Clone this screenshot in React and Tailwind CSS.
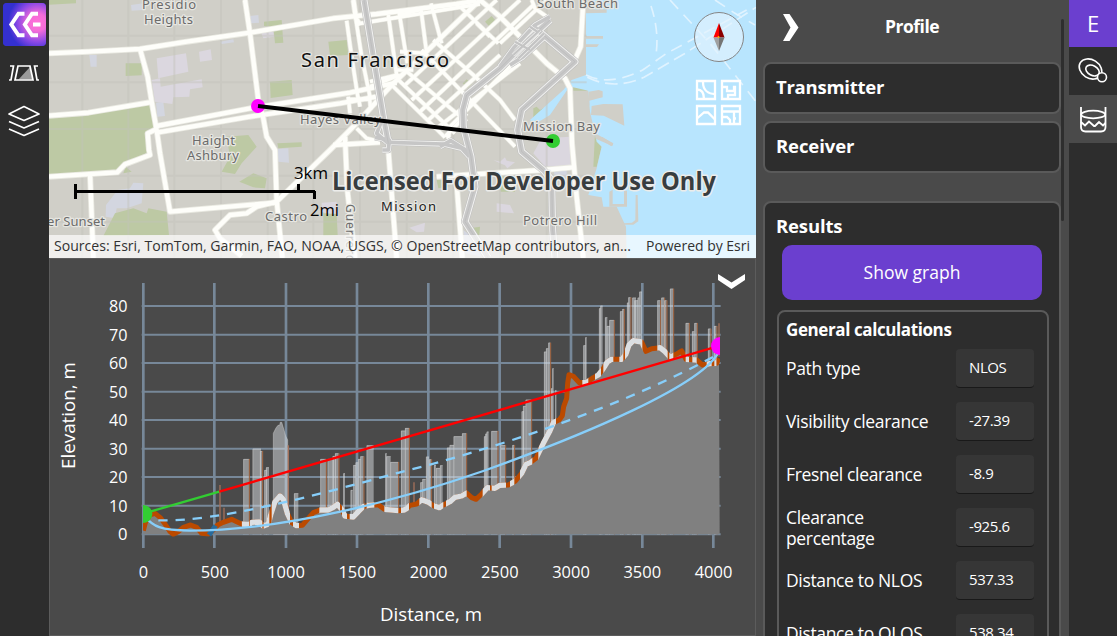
import React from 'react';

const shift = (pts, dx, dy = 0) => pts.map(([x, y]) => [x + dx, y + dy]);
const str = (pts) => pts.map((p) => p.join(',')).join(' ');

/* ---------- map data, in thirds of a pixel ---------- */
const roads = [
  '147,160 265,155 420,147 560,125 750,98 1000,55 1130,42 1370,12 1430,2',
  '420,147 443,230 455,305 470,390 480,460 510,635 828,608',
  '147,347 265,338 450,307',
  '470,378 750,325 1050,278 1190,248',
  '470,398 750,350 1020,310 1130,290',
  '735,0 750,100 775,300 790,355 800,410 825,450 830,600 847,774',
  '470,387 443,400 447,450 450,465 375,493 352,517 147,530',
  '270,520 280,774',
  '830,605 770,620 740,640 690,645 645,690 660,715 725,768',
  '830,605 990,450 1070,370 1180,250 1440,0',
  '1000,435 1140,427',
  '1035,410 1042,570 1065,774',
  '1165,450 1190,774',
  '1370,550 1387,774',
  '1310,530 1630,510 1720,502',
  '1440,0 1500,50 1640,190 1695,235 1710,265 1716,430 1730,590 1750,774',
  '1750,0 1742,140 1720,190',
  '1060,0 1068,55 1080,75',
];
const streets = [
  '1068,60 1085,170 1110,290', '1040,62 1055,170 1075,300', '1165,45 1190,225', '1197,35 1222,190', '1262,20 1280,160',
  '1293,10 1325,130', '1070,72 1440,12', '1110,260 1200,225', '1040,298 1110,298', '1045,290 1050,340', '1075,290 1080,320', '1108,285 1112,330',
  '1210,260 1490,0', '1235,300 1560,0', '1260,335 1600,15', '1285,360 1500,165', '1310,385 1560,190', '1335,410 1370,375 1400,340', '1500,130 1640,0',
  '1170,250 1335,412', '1190,235 1365,400', '1215,210 1400,365', '1265,150 1420,310 1545,440', '1300,120 1420,225 1500,300 1545,360',
  '1380,20 1495,130', '1430,70 1470,110', '1200,155 1280,160', '1200,45 1260,30', '1110,245 1190,225', '1190,210 1240,210',
  '1345,418 1350,380 1420,310 1560,170', '1595,0 1605,25 1640,50', '1070,385 1100,415 1140,425',
];
const freeways = [
  '1650,60 1590,115 1500,205 1400,285 1388,330 1390,380 1413,470 1425,560 1395,665 1430,720 1465,774',
  '1600,80 1725,185 1565,330 1553,390 1565,455 1630,510 1655,540 1658,690 1665,774',
  '1092,0 1125,200 1150,350 1165,430',
];
const ramps = [
  '1165,427 1330,432 1385,445 1408,470', '1150,350 1130,400 1165,430', '1125,412 1168,420 1165,450 1147,450',
  '1320,440 1352,422 1405,455', '1500,200 1540,145 1605,75 1650,50', '1530,195 1570,170 1640,105',
];
const lanes = [
  '1540,165 1620,90', '1555,175 1632,100', '1590,80 1612,95', '1545,125 1590,150',
];
const parks = [
  '147,350 265,342 450,312 465,385 443,400 447,455 375,490 352,512 147,525',
  '147,0 228,0 228,10 147,14', '377,190 425,190 425,226 377,228', '810,245 875,240 878,285 812,294', '792,65 845,60 850,128 825,130 820,80 792,78',
  '985,125 1040,120 1045,165 990,168', '1455,65 1475,48 1490,65 1470,82', '1388,250 1400,238 1415,252 1402,265',
  '680,410 745,405 770,440 725,490 705,522 665,515 690,470', '718,545 760,520 800,535 795,565 760,562', '832,430 905,427 905,440 835,445',
  '345,640 400,625 440,640 445,625 500,635 507,705 310,708', '970,640 1010,642 1013,705 970,708', '1785,400 1805,440 1790,500 1780,500',
  '1600,325 1610,320 1620,330 1675,300 1640,335 1600,360', '1720,262 1760,262 1762,272 1720,272', '1410,685 1440,680 1438,705 1415,705',
  '377,500 395,515 370,520', '1310,540 1345,537 1345,560 1315,565', '1500,530 1540,525 1545,575 1502,575', '1165,182 1185,180 1187,205 1168,205',
  '500,390 720,352 720,358 500,396',
];
const lavender = [
  '470,175 558,160 565,215 475,235', '597,155 632,148 636,180 600,185', '455,240 480,235 482,260 605,238 608,262 570,268 568,290 520,292 517,312 465,305',
  '1625,415 1710,410 1712,495 1635,500 1600,460', '1480,480 1500,485 1515,472 1520,482 1545,487 1522,505 1515,496 1500,490', '1490,610 1530,615 1542,640 1490,635', '1228,683 1275,668 1272,695 1250,697',
  '782,95 820,95 822,110 790,115', '965,608 1010,605 1015,650 965,635',
];
const bluish = [
  '393,15 430,10 430,30 395,32', '268,165 290,165 290,200 272,200', '750,48 775,45 777,68 753,70', '660,125 700,118 702,127 665,132',
  '468,308 490,305 495,348 472,350', '353,570 390,565 400,548 430,550 425,610 380,625 350,625 345,655 317,650 318,615', '832,447 865,445 867,488 835,485',
  '1660,510 1700,510 1700,530 1665,530', '1390,690 1440,730 1445,770 1395,760',
];

function MapLabel({ x, y, w, size = 13, fill = '#6b6b6b', halo = '#e6e6e1', children }) {
  return (
    <text x={x} y={y} textLength={w} fontSize={size} fill={fill} stroke={halo} strokeWidth="2.5" strokeLinejoin="round" paintOrder="stroke">
      {children}
    </text>
  );
}

function MapView() {
  return (
    <svg className="block h-[258px] w-[707px]" viewBox="49 0 707 258" fontFamily="'Noto Sans', sans-serif">
      <rect x="49" width="707" height="258" fill="#d0cfc8" />
      <g transform="scale(.33333)">
        {bluish.map((p) => <polygon key={p} points={p} fill="#d3d6e0" />)}
        {lavender.map((p) => <polygon key={p} points={p} fill="#dbd7df" />)}
        {parks.map((p) => <polygon key={p} points={p} fill="#bdc9a4" />)}
        <polygon fill="#b8e5fe" points="1780,0 2268,0 2268,774 1880,774 1878,680 1850,620 1810,620 1805,592 1765,585 1790,505 1805,440 1790,425 1785,400 1770,335 1765,272 1720,262 1705,265 1650,345 1605,372 1590,360 1690,270 1715,240 1758,225 1758,40 1820,38 1820,28 1780,28" />
        <g fill="#d0cfc8">
          <path d="M1755 108h54v8h-54zM1755 133h42l-6 8h-36zM1766 275l30-5 12 4v18l-40 10v14h-5zM1775 318l35-6 58 1 5 64-62-30-38-2zM1785 400l55 30-3 8-50-22z" />
          <path d="M1795 413l12-2 32 20-5 8zM1828 575l10-6v43h34v-40h9v48h-53zM1907 585h6l2 79-15 10h-28v-4l24-2 10-8z" />
        </g>
        <g stroke="#c3c3bb" strokeWidth="6" opacity=".45">
          {[247, 385, 523, 663, 803, 940, 1080, 1220, 1360, 1500, 1640].map((x) => <path key={x} d={`M${x} 0V774`} />)}
          {[107, 247, 387, 527, 665].map((y) => <path key={y} d={`M147 ${y}H1760`} />)}
        </g>
        <g fill="none" strokeLinejoin="round">
          {roads.map((p) => <polyline key={p} points={p} stroke="#e9e9e1" strokeWidth="18" />)}
          {streets.map((p) => <polyline key={p} points={p} stroke="#e9e9e1" strokeWidth="14" />)}
          {streets.map((p) => <polyline key={p} points={p} stroke="#fefefa" strokeWidth="10" />)}
          {roads.map((p) => <polyline key={p} points={p} stroke="#fefefa" strokeWidth="13" />)}
          {ramps.map((p) => <polyline key={p} points={p} stroke="#bdbdbd" strokeWidth="19" />)}
          {freeways.map((p) => <polyline key={p} points={p} stroke="#bdbdbd" strokeWidth="24" />)}
          {ramps.map((p) => <polyline key={p} points={p} stroke="#f2f2f0" strokeWidth="16" />)}
          {freeways.map((p) => <polyline key={p} points={p} stroke="#f2f2f0" strokeWidth="21" />)}
          {ramps.map((p) => <polyline key={p} points={p} stroke="#c6c6c6" strokeWidth="11" />)}
          {freeways.map((p) => <polyline key={p} points={p} stroke="#c8c8c8" strokeWidth="15" />)}
          {freeways.map((p) => <polyline key={p} points={p} stroke="#b9b9b9" strokeWidth="2" />)}
          {lanes.map((p) => <polyline key={p} points={p} stroke="#f2f2f0" strokeWidth="11" />)}
          {lanes.map((p) => <polyline key={p} points={p} stroke="#c4c4c4" strokeWidth="7" />)}
        </g>
        <g fill="none" stroke="#e0f3ff" strokeWidth="5">
          <path d="M1953 18q25 75 15 145" strokeDasharray="34 18" />
          <path d="M1758 225q70 35 170-15l72-50 240-130" strokeDasharray="36 20" />
          <path d="M1762 232q80 40 170 0l120-70 216-140" strokeDasharray="38 18" />
          <path d="M2010 0l120 130 138 175M2145 0l60 40 60 35" strokeDasharray="36 24" />
        </g>
      </g>
      <MapLabel x="142" y="9" w="54">Presidio</MapLabel>
      <MapLabel x="144" y="24" w="49">Heights</MapLabel>
      <MapLabel x="537" y="8" w="81">South Beach</MapLabel>
      <MapLabel x="301" y="67" w="148" size="20" fill="#111">San Francisco</MapLabel>
      <MapLabel x="300" y="124" w="81">Hayes Valley</MapLabel>
      <MapLabel x="523" y="131" w="77">Mission Bay</MapLabel>
      <MapLabel x="192" y="145" w="43">Haight</MapLabel>
      <MapLabel x="187" y="160" w="52">Ashbury</MapLabel>
      <MapLabel x="265" y="221" w="42">Castro</MapLabel>
      <MapLabel x="47" y="226" w="58">er Sunset</MapLabel>
      <MapLabel x="381" y="211" w="55" fill="#222">Mission</MapLabel>
      <MapLabel x="523" y="225" w="74">Potrero Hill</MapLabel>
      <g transform="rotate(90 346 204)">
        <MapLabel x="346" y="204" w="58" size="12">Guerrero</MapLabel>
      </g>

      <circle cx="258" cy="106" r="7" fill="#f0f" />
      <circle cx="553" cy="141" r="7" fill="#32cd32" />
      <path d="M258 106L553 141" stroke="#000" strokeWidth="4" />

      <path d="M75.500 184v15M75 191.500h240M298.500 184v8M314.500 191v8" stroke="#000" strokeWidth="3" fill="none" />
      <g fill="#000" fontFamily="'Open Sans', sans-serif" fontSize="17">
        <text x="294" y="179" textLength="34" lengthAdjust="spacingAndGlyphs">3km</text>
        <text x="310" y="216" textLength="29" lengthAdjust="spacingAndGlyphs">2mi</text>
      </g>
      <text x="332" y="190" textLength="384" lengthAdjust="spacingAndGlyphs" fontFamily="'Open Sans', sans-serif" fontWeight="700" fontSize="24.500" fill="#383d3f" stroke="#ececea" strokeWidth="3" strokeLinejoin="round" paintOrder="stroke">Licensed For Developer Use Only</text>

      <circle cx="719" cy="37" r="24.500" fill="#e3f3fe" fillOpacity=".65" stroke="#858585" />
      <path d="M719 23l-5.500 14.500h5.500z" fill="#f00" />
      <path d="M719 23l5.500 14.500H719z" fill="#8b0000" />
      <path d="M713.500 37.500h5.500V51z" fill="#a0a0a0" />
      <path d="M719 37.500h5.500L719 51z" fill="#757575" />
      <circle cx="718.500" cy="37" r="1" fill="#ffb000" />
      <g fill="none" stroke="#fff" strokeWidth="2.300">
        <path d="M697 81h18v18h-18zM722 81h18v18h-18zM697 106h18v18h-18zM722 106h18v18h-18z" />
        <path d="M703 82c0 8 5 12 12 12M697 89.500c5 0 7 4 7 9.500M722 87h5v4h7v-4h1v8h-7v4M733 87h3" />
        <path d="M697 118.500l7-6h4l7 7M722 111.500h18M734 112v12M722 117h5l3 3v4M734 118.500h2" />
      </g>

      <rect x="49" y="235" width="707" height="23" fill="#fff" fillOpacity=".67" />
      <g fill="#323232" fontFamily="'Open Sans', sans-serif" fontSize="14.500">
        <text x="54" y="251" textLength="577" lengthAdjust="spacingAndGlyphs">Sources: Esri, TomTom, Garmin, FAO, NOAA, USGS, © OpenStreetMap contributors, an...</text>
        <text x="646" y="251" textLength="104" lengthAdjust="spacingAndGlyphs">Powered by Esri</text>
      </g>
    </svg>
  );
}

/* ---------- elevation profile, in thirds of a pixel ---------- */
const terrain = [
  [280, 782], [287, 755], [300, 735], [315, 730], [330, 742], [345, 762], [360, 785], [370, 793], [385, 785], [400, 772], [422, 765], [440, 772], [455, 790],
  [475, 792], [490, 780], [503, 765], [520, 757], [545, 748], [560, 755], [575, 762], [598, 764], [605, 757], [628, 756], [640, 768], [655, 762], [662, 735],
  [675, 695], [690, 678], [700, 688], [712, 730], [725, 758], [740, 767], [757, 766], [775, 745], [790, 728], [810, 720], [835, 720], [850, 712], [862, 703],
  [875, 718], [885, 738], [910, 741], [925, 725], [940, 710], [955, 706], [985, 704], [1003, 718], [1045, 722], [1062, 720],
  ...shift([
    [20, 716], [30, 706], [50, 702], [65, 689], [85, 697], [102, 708], [118, 713], [130, 705], [150, 695], [165, 682], [185, 678], [200, 669], [215, 683],
    [228, 688], [245, 672], [262, 653], [285, 655], [300, 646], [325, 645], [345, 634], [365, 610], [378, 583], [392, 577], [408, 565], [430, 520], [450, 482],
    [460, 458], [478, 449], [487, 437], [491, 410], [500, 385], [503, 340], [507, 314], [520, 319], [538, 338], [560, 337], [580, 323], [595, 315], [608, 299],
    [622, 276], [635, 268], [665, 268], [678, 252], [687, 225], [700, 212], [725, 216], [738, 244], [755, 236], [780, 233], [795, 245], [810, 262], [828, 253],
    [845, 243], [858, 268], [890, 270], [907, 285], [930, 281], [950, 280], [957, 265],
  ], 1050),
];
const shown = [
  [575, 598], [600, 637], [641, 658], [665, 720], [729, 747], [808, 870], [876, 891], [899, 943], [950, 973], [1003, 1045],
  ...[[3, 27], [58, 95], [102, 130], [138, 200], [248, 270], [275, 318], [330, 343], [360, 397], [415, 468], [547, 565], [585, 603], [610, 640], [658, 670],
    [675, 727], [772, 803], [808, 820], [857, 867], [877, 890], [920, 935], [943, 950]].map((r) => r.map((v) => v + 1050)),
];
const place = (list, dx = 0) => list.map((b) => [b[0] + dx, b[1] + dx, b[2], b[3]]);
const buildings = [
  ...place([
    [580, 597, 567, 1], [608, 633, 536, 0], [630, 637, 543, 1], [643, 650, 600], [648, 657, 592], [732, 745, 670], [811, 828, 567, 1], [833, 852, 567], [848, 857, 558],
    [855, 866, 550, 1], [880, 885, 610], [902, 908, 660], [910, 918, 585], [917, 925, 577], [924, 932, 567], [931, 941, 559, 1], [950, 971, 526], [1006, 1010, 550],
    [1009, 1022, 559], [1021, 1045, 576, 1],
  ]),
  ...place([
    [3, 16, 482], [15, 27, 474, 1], [61, 68, 637], [67, 77, 627], [78, 87, 560], [87, 94, 568, 1], [102, 108, 585], [108, 120, 594], [120, 128, 586], [141, 150, 533],
    [149, 162, 525], [161, 186, 499], [186, 199, 490, 1], [252, 257, 499], [256, 261, 491], [260, 266, 485], [274, 293, 483, 1], [301, 316, 525, 1], [337, 343, 525, 1],
    [365, 372, 424], [369, 377, 408], [377, 394, 389, 1], [432, 439, 245], [438, 445, 235], [445, 451, 218, 1], [453, 457, 355], [457, 461, 295], [466, 469, 360],
    [550, 557, 226], [556, 560, 202], [597, 602, 115], [601, 608, 107], [615, 622, 142], [620, 630, 168], [628, 642, 150, 1], [660, 668, 124], [667, 672, 117, 1],
    [681, 686, 98], [685, 692, 82, 1], [697, 708, 83], [703, 714, 91], [713, 718, 83], [718, 726, 65], [772, 781, 91, 1], [784, 793, 83, 1], [793, 800, 91, 1],
    [810, 820, 56, 1], [857, 867, 159, 1], [876, 883, 184], [883, 891, 159, 1], [924, 932, 176, 1], [942, 950, 168, 1],
  ], 1050),
];
const gridX = [280, 493, 708, 921, 1135, 1349, 1563, 1777, 1990];
const gridY = [108, 194, 279, 365, 450, 536, 621, 707, 793];

function Profile() {
  return (
    <svg className="block h-[376px] w-[705px]" viewBox="50 259 705 376" fontFamily="'Open Sans', sans-serif" fill="#fff">
      <defs>
        <clipPath id="plot"><rect x="279" y="0" width="1731" height="800" /></clipPath>
        <clipPath id="built">{shown.map(([a, b]) => <rect key={a} x={a} y="0" width={b - a} height="800" />)}</clipPath>
      </defs>
      <g transform="translate(50 270) scale(.33333)">
        <g stroke="#778899" strokeWidth="8" fill="none">
          {gridX.map((x) => <path key={x} d={`M${x} 39V834`} />)}
        </g>
        <g stroke="#778899" strokeWidth="6">
          {gridY.map((y) => <path key={y} d={`M275 ${y}H2012`} />)}
        </g>
        {buildings.map(([a, b, t, edge]) => (
          <g key={a}>
            <path d={`M${a} 793V${t}H${b}V793z`} fill="#dfe3e8" fillOpacity=".48" />
            <path d={`M${a + 1} 793V${t + 1}H${b}`} stroke="#c9c9c9" strokeOpacity=".5" strokeWidth="3" fill="none" />
            {edge ? <path d={`M${b + 1} ${t}V793`} stroke="#a3643f" strokeWidth="3" /> : null}
          </g>
        ))}
        <path d="M670 793V490l8-16 6-8h5l2-9h4l6 20 6 21 6 12v283z" fill="#dfe3e8" fillOpacity=".48" stroke="#c9c9c9" strokeOpacity=".5" strokeWidth="3" />
        <g stroke="#a3705a" strokeWidth="4"><path d="M510 645V765M522 713V757M715 526V740M1092 637V700M2007 160V260" /></g>
        <polygon fill="#808080" points={`280,793 ${str(terrain)} 2009,793`} />
        <g clipPath="url(#plot)" fill="none" strokeLinejoin="round">
          <polyline points={str(terrain)} stroke="#bb4a00" strokeWidth="15" />
          <polyline points={str(terrain)} stroke="#dcdfe2" strokeWidth="16" clipPath="url(#built)" />
          <path d="M477 795L497 767" stroke="#296b9c" strokeWidth="15" />
          <path d="M283 738C310 770 330 781 420 782C700 782 1050 690 1300 603C1600 495 1960 345 2006 245" stroke="#87cefa" strokeWidth="7" />
          <path d="M325 751C500 757 800 675 1050 607C1300 545 1700 420 2005 252" stroke="#87cefa" strokeWidth="7" strokeDasharray="28 24" />
          <path d="M300 725L508 665" stroke="#32cd32" strokeWidth="7" />
          <path d="M508 665L2000 230" stroke="#f00" strokeWidth="7" />
          <circle cx="280" cy="732" r="27" fill="#32cd32" />
          <circle cx="2010" cy="228" r="27" fill="#f0f" />
        </g>
      </g>
      <g fontSize="17">
        {[80, 70, 60, 50, 40, 30, 20, 10].map((v, i) => <text key={v} x="109" y={312 + i * 28.500} textLength="18.500" lengthAdjust="spacingAndGlyphs">{v}</text>)}
        <text x="118" y="540" textLength="9.500" lengthAdjust="spacingAndGlyphs">0</text>
        {[0, 500, 1000, 1500, 2000, 2500, 3000, 3500, 4000].map((v, i) => {
          const w = String(v).length * 9.4;
          return <text key={v} x={143.5 + i * 71.25 - w / 2} y="578" textLength={w} lengthAdjust="spacingAndGlyphs">{v}</text>;
        })}
      </g>
      <text x="380" y="621" fontSize="18" textLength="102" lengthAdjust="spacingAndGlyphs">Distance, m</text>
      <text transform="translate(75 469) rotate(-90)" fontSize="18" textLength="107" lengthAdjust="spacingAndGlyphs">Elevation, m</text>
      <path d="M718 274v6l13.500 9 13.500-9v-6l-13.500 8.500z" />
    </svg>
  );
}

function LeftRail() {
  return (
    <nav className="flex w-[49px] shrink-0 flex-col items-start bg-[#2d2d2d] pt-[3px]">
      <svg className="ml-[3px] h-[43px] w-[43px]" viewBox="0 0 43 43">
        <defs>
          <radialGradient id="glow" cx=".8" cy=".45" r=".68">
            <stop offset="0" stopColor="#ff70d8" /><stop offset=".3" stopColor="#f46cd8" /><stop offset=".68" stopColor="#8a48e6" /><stop offset="1" stopColor="#3430d0" />
          </radialGradient>
        </defs>
        <rect width="43" height="43" rx="4" fill="#332fd0" />
        <rect width="43" height="43" rx="4" fill="url(#glow)" />
        <path d="M21.500 10.700h-6L8.300 21.500 15.500 32.300h6M35 10.700h-6L21.800 21.500 29 32.300H35M30 21.500h7.500" fill="none" stroke="#fff" strokeWidth="3.900" />
      </svg>
      <svg className="mt-[17px] ml-[8px] h-[20px] w-[32px]" viewBox="8 63 32 20" fill="none" stroke="#fff" strokeWidth="1.700">
        <path d="M30 67l2.500 12.500H18.500z" fill="#999" stroke="none" /><path d="M18 66h12l3 14H15z" />
        <path d="M10 66h3.500l-2.500 14H9M38 66h-3.500l2.500 14h2" />
      </svg>
      <svg className="mt-[20px] ml-[7px] h-[34px] w-[34px]" viewBox="7 103 34 34" fill="none" stroke="#fff" strokeWidth="1.700" strokeLinejoin="round">
        <path d="M24 106.500l15 7.500-15 6.500L9 114zM9 121.500l15 6.500 15-6.500M9 129l15 6.500 15-6.500" />
      </svg>
    </nav>
  );
}

function RightRail() {
  return (
    <nav className="flex w-[48px] shrink-0 flex-col bg-[#2d2d2d]">
      <div className="flex h-[47px] items-center justify-center bg-[#6b3fcf] font-['Open_Sans',sans-serif] text-[22px] text-white">E</div>
      <div className="flex h-[48px] items-center justify-center">
        <svg className="h-[28px] w-[32px]" viewBox="1077 57 32 28" fill="none" stroke="#fff" strokeWidth="1.600">
          <ellipse cx="1090.500" cy="69" rx="12" ry="9.300" transform="rotate(32 1090.500 69)" />
          <ellipse cx="1092.500" cy="70.500" rx="7.200" ry="4.800" transform="rotate(28 1092.500 70.500)" />
          <circle cx="1102" cy="77.300" r="4.500" fill="#2d2d2d" />
        </svg>
      </div>
      <div className="flex h-[48px] items-center justify-center bg-[#4a4a4a]">
        <svg className="h-[28px] w-[30px]" viewBox="1078 105 30 28" fill="none" stroke="#fff" strokeWidth="1.800">
          <path d="M1081 107v20q0 4.500 4.500 4.500h15.500q4.500 0 4.500-4.500v-20" />
          <ellipse cx="1093.200" cy="114.500" rx="12" ry="3.800" />
          <path d="M1081 122l4 3.500 4-4 5 4.500h1l4-4 4 3.500 2.500-2.500" />
        </svg>
      </div>
    </nav>
  );
}

const rows = [
  ['Path type', 'NLOS'],
  ['Visibility clearance', '-27.39'],
  ['Fresnel clearance', '-8.9'],
  ['Clearance percentage', '-925.6'],
  ['Distance to NLOS', '537.33'],
  ['Distance to OLOS', '538.34'],
];

function SidePanel() {
  return (
    <aside className="flex w-[313px] shrink-0 overflow-hidden bg-[#4a4a4a] pl-[7px] font-['Open_Sans','Noto_Sans',sans-serif] text-white">
      <div className="flex w-[298px] shrink-0 flex-col">
        <header className="flex h-[62px] shrink-0 items-start">
          <svg className="mt-[14px] ml-[20px] h-[28px] w-[16px] shrink-0" viewBox="0 0 16 28" fill="#fff"><path d="M0 0h6.500L15.500 13.500 6.500 27H0l7.500-13.500z" /></svg>
          <h1 className="ml-[86px] pt-[14px] text-[17.5px] leading-[25px] font-bold tracking-[-0.5px]">Profile</h1>
        </header>
        <section className="flex h-[52px] shrink-0 items-center rounded-lg border-2 border-[#5a5a5a] bg-[#2d2d2d] px-[11px] pb-[3px] text-[18.5px] font-bold tracking-[-0.25px]">Transmitter</section>
        <section className="mt-[7px] flex h-[52px] shrink-0 items-center rounded-lg border-2 border-[#5a5a5a] bg-[#2d2d2d] px-[11px] pb-[3px] text-[18.5px] font-bold tracking-[-0.1px]">Receiver</section>
        <section className="mt-[28px] flex h-[500px] shrink-0 flex-col rounded-t-lg border-2 border-[#5a5a5a] bg-[#2d2d2d] pl-[11px]">
          <h2 className="mt-[10px] h-[32px] shrink-0 text-[18.5px] leading-[25px] font-bold tracking-[-0.15px]">Results</h2>
          <button className="ml-[6px] h-[55px] w-[260px] shrink-0 rounded-[10px] bg-[#6b3fcf] text-[17.5px]">Show graph</button>
          <div className="mt-[10px] ml-px flex h-[420px] w-[272px] shrink-0 flex-col rounded-t-lg border-2 border-[#5a5a5a] pl-[7px]">
            <h3 className="mt-[7px] h-[30px] shrink-0 text-[17px] leading-[22px] font-bold tracking-[-0.4px]">General calculations</h3>
            {rows.map(([label, value]) => (
              <div key={label} className="mb-[14px] flex h-[39px] shrink-0 items-center">
                <span className="w-[170px] pr-[22px] text-[17.5px] leading-[21px] tracking-[-0.35px]">
                  {label}
                </span>
                <span className="h-[39px] w-[78px] rounded-[4px] border-b border-[#191919] bg-[#363636] pl-[13px] text-[15px] leading-[36px] tracking-[-0.4px]">{value}</span>
              </div>
            ))}
          </div>
        </section>
      </div>
      <div className="mt-[19px] h-[202px] w-[3px] rounded-full bg-[#2e2e2e]" />
    </aside>
  );
}

export default function App() {
  return (
    <div className="flex h-[636px] w-[1117px] overflow-hidden bg-[#4a4a4a]">
      <LeftRail />
      <main className="flex w-[707px] shrink-0 flex-col">
        <MapView />
        <div className="h-[378px] border border-[#5c5c5c] bg-[#4a4a4a]"><Profile /></div>
      </main>
      <SidePanel />
      <RightRail />
    </div>
  );
}
